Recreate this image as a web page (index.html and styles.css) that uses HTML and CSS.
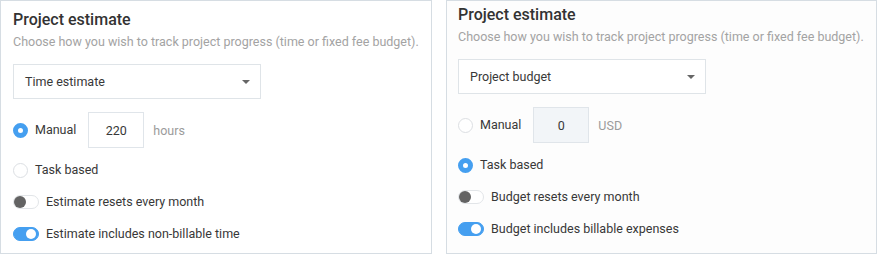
FILE: index.html
```html
<!DOCTYPE html>
<html lang="en">
<head>
    <meta charset="UTF-8">
    <title>Project estimate</title>
    <link rel="stylesheet" href="styles.css">
</head>
<body>
    <div class="panels">

        <!-- Time estimate -->
        <div class="panel">
            <h2>Project estimate</h2>
            <p class="hint">Choose how you wish to track project progress (time or fixed fee budget).</p>
            <div class="select">
                <span>Time estimate</span>
                <span class="caret"></span>
            </div>
            <div class="row row-input">
                <span class="radio checked"></span>
                <span class="label">Manual</span>
                <span class="num">220</span>
                <span class="unit">hours</span>
            </div>
            <div class="row">
                <span class="radio"></span>
                <span class="label">Task based</span>
            </div>
            <div class="row">
                <span class="toggle"></span>
                <span class="label">Estimate resets every month</span>
            </div>
            <div class="row">
                <span class="toggle on"></span>
                <span class="label">Estimate includes non-billable time</span>
            </div>
        </div>

        <!-- Budget -->
        <div class="panel panel-up">
            <h2>Project estimate</h2>
            <p class="hint">Choose how you wish to track project progress (time or fixed fee budget).</p>
            <div class="select">
                <span>Project budget</span>
                <span class="caret"></span>
            </div>
            <div class="row row-input">
                <span class="radio"></span>
                <span class="label">Manual</span>
                <span class="num disabled">0</span>
                <span class="unit">USD</span>
            </div>
            <div class="row">
                <span class="radio checked"></span>
                <span class="label">Task based</span>
            </div>
            <div class="row">
                <span class="toggle"></span>
                <span class="label">Budget resets every month</span>
            </div>
            <div class="row">
                <span class="toggle on"></span>
                <span class="label">Budget includes billable expenses</span>
            </div>
        </div>

    </div>
</body>
</html>
```

FILE: styles.css
```css
body {
    margin: 0;
    font-family: Roboto, "Liberation Sans", Arial, sans-serif;
    font-size: 12.5px;
    color: #383838;
    background-color: #fff;
}

.panels {
    display: flex;
    gap: 14px;
}

.panel {
    box-sizing: border-box;
    width: 432px;
    height: 254px;
    border: 1px solid #d6dde3;
    padding: 9px 12px 0 12px;
}

.panel-up {
    width: 431px;
    padding-top: 4px;
    padding-left: 11px;
    background-color: #fdfdfd;
}

.panel h2 {
    margin: 0;
    font-size: 16px;
    line-height: 20px;
    font-weight: 500;
    color: #333;
}

.hint {
    margin: 4px 0 0 0;
    line-height: 16px;
    white-space: nowrap;
    color: #a3a3a3;
}

.select {
    box-sizing: border-box;
    width: 248px;
    height: 35px;
    margin-top: 14px;
    padding: 0 10px 0 11px;
    border: 1px solid #dfe4e8;
    background-color: #fff;
    display: flex;
    align-items: center;
    justify-content: space-between;
}

.caret {
    width: 0;
    height: 0;
    border-left: 4px solid transparent;
    border-right: 4px solid transparent;
    border-top: 4px solid #666;
}

.row {
    display: flex;
    align-items: center;
    height: 20px;
    margin-top: 12px;
}

.row-input {
    height: 36px;
    margin-top: 13px;
}

.label {
    margin-left: 7px;
    line-height: 16px;
}

.radio {
    box-sizing: border-box;
    width: 15px;
    height: 15px;
    border-radius: 50%;
    border: 1px solid #dcdfe3;
    background-color: #fff;
    flex-shrink: 0;
}

.radio.checked {
    border: 5px solid #459ff0;
    background-color: #fff;
}

.num {
    box-sizing: border-box;
    width: 56px;
    height: 36px;
    margin-left: 12px;
    border: 1px solid #e0e5ea;
    background-color: #fff;
    display: flex;
    align-items: center;
    justify-content: center;
}

.num.disabled {
    background-color: #f2f5f8;
}

.unit {
    margin-left: 9px;
    color: #9b9b9b;
}

.toggle {
    position: relative;
    box-sizing: border-box;
    width: 26px;
    height: 14px;
    border-radius: 7px;
    border: 1px solid #e2e5e8;
    background-color: #fff;
    flex-shrink: 0;
}

.toggle::after {
    content: "";
    position: absolute;
    top: 0;
    left: 0;
    width: 12px;
    height: 12px;
    border-radius: 50%;
    background-color: #636363;
}

.toggle.on {
    border-color: #459ff0;
    background-color: #459ff0;
}

.toggle.on::after {
    left: 12px;
    top: 1px;
    width: 10px;
    height: 10px;
    background-color: #fff;
}
```
